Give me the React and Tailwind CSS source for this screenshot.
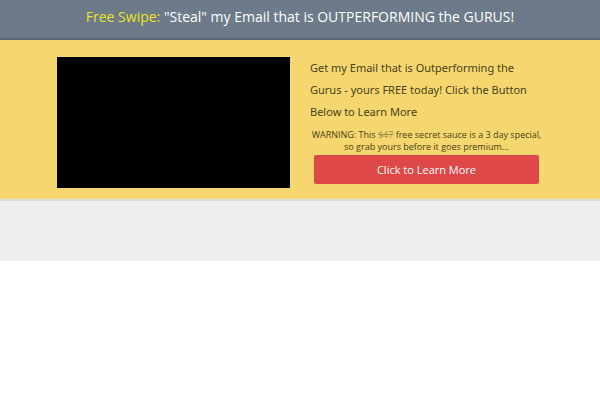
const Header = () => (
  <header className="border-b-2 border-[#5b6876] bg-[#6d7a89] px-4 pb-1">
    <h1 className="text-center text-[14px] leading-[34px] text-white">
      <span className="text-[#ece51f]">Free Swipe:</span> &quot;Steal&quot; my Email that is OUTPERFORMING the GURUS!
    </h1>
  </header>
)

const Offer = () => (
  <div className="min-w-0 flex-1">
    <h2 className="font-['Noto_Sans',sans-serif] text-[11px] leading-[22px]">
      Get my Email that is Outperforming the Gurus - yours FREE today! Click the Button Below to Learn More
    </h2>
    <p className="mt-1.5 text-center text-[9px] leading-3">
      WARNING: This <s className="text-[#a08f50]">$47</s> free secret sauce is a 3 day special,
      <br />
      so grab yours before it goes premium...
    </p>
    <div className="mt-0.5 px-1">
      <button type="button" className="w-full rounded-xs bg-[#df4848] text-[11px] leading-[29px] text-white">
        Click to Learn More
      </button>
    </div>
  </div>
)

const App = () => (
  <div className="font-['Open_Sans',sans-serif] text-[#4a4018]">
    <Header />
    <main className="border-b-2 border-[#dddbd6] bg-[#f6d76f] px-[57px] pt-[17px] pb-[11px]">
      <div className="flex gap-5">
        <div className="h-[131px] flex-1 bg-black" />
        <Offer />
      </div>
    </main>
    <footer className="h-15 bg-[#eeeeee]" />
  </div>
)

export default App
